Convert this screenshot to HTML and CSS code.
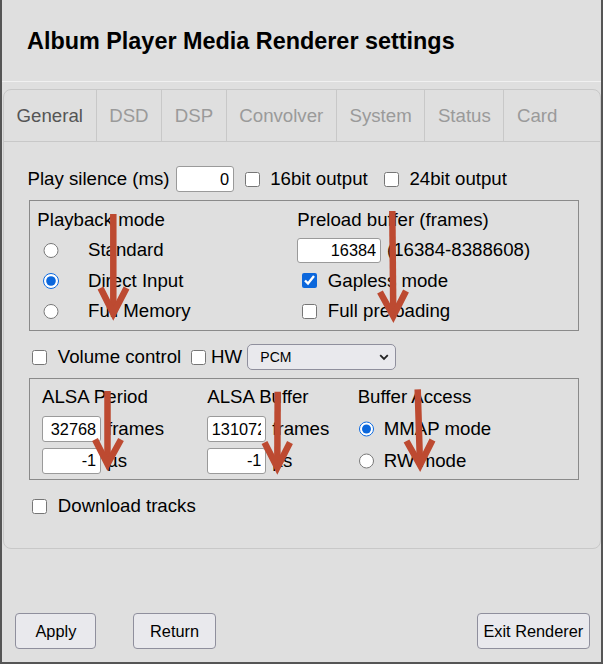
FILE: index.html
```html
<!DOCTYPE html>
<html lang="en">
<head>
<meta charset="utf-8">
<title>Album Player Media Renderer settings</title>
<link rel="stylesheet" href="styles.css">
</head>
<body>
<div class="dialog">
  <header class="dlg-head">
    <h1 class="dlg-title">Album Player Media Renderer settings</h1>
  </header>

  <section class="tabs">
    <nav class="tab-bar">
      <span class="tab active">General</span>
      <span class="tab">DSD</span>
      <span class="tab">DSP</span>
      <span class="tab">Convolver</span>
      <span class="tab">System</span>
      <span class="tab">Status</span>
      <span class="tab last">Card</span>
    </nav>

    <div class="tab-body">
      <div class="row">
        <span class="lbl">Play silence (ms)</span>
        <input class="num in-silence" type="text" value="0">
        <input class="cb cb-16" type="checkbox">
        <span class="small-lbl">16bit output</span>
        <input class="cb cb-24" type="checkbox">
        <span class="small-lbl">24bit output</span>
      </div>

      <fieldset class="box box-play">
        <div class="cell">Playback mode</div>
        <div class="cell">Preload buffer (frames)</div>

        <div class="cell"><span class="rwrap"><input class="rb" type="radio" name="pmode"></span>Standard</div>
        <div class="cell"><input class="num in-preload" type="text" value="16384"><span class="after">(16384-8388608)</span></div>

        <div class="cell"><span class="rwrap"><input class="rb" type="radio" name="pmode" checked></span>Direct Input</div>
        <div class="cell"><input class="cb cb-opt" type="checkbox" checked><span class="opt-lbl">Gapless mode</span></div>

        <div class="cell"><span class="rwrap"><input class="rb" type="radio" name="pmode"></span>Full Memory</div>
        <div class="cell"><input class="cb cb-opt" type="checkbox"><span class="opt-lbl">Full preloading</span></div>
      </fieldset>

      <div class="row row-vol">
        <input class="cb cb-vol" type="checkbox">
        <span class="opt-lbl">Volume control</span>
        <input class="cb cb-hw" type="checkbox">
        <span class="hw-lbl">HW</span>
        <span class="sel-wrap">
          <select class="sel">
            <option>PCM</option>
          </select>
          <svg class="chev" width="10" height="7" viewBox="0 0 10 7"><path d="M1.2 1.2 L5 5 L8.8 1.2" fill="none" stroke="#222" stroke-width="1.8"/></svg>
        </span>
      </div>

      <fieldset class="box box-alsa">
        <div class="cell">ALSA Period</div>
        <div class="cell">ALSA Buffer</div>
        <div class="cell">Buffer Access</div>

        <div class="cell"><input class="num in-alsa" type="text" value="32768"><span class="after">frames</span></div>
        <div class="cell"><input class="num in-alsa" type="text" value="131072"><span class="after">frames</span></div>
        <div class="cell"><input class="rb rb-acc" type="radio" name="acc" checked><span class="acc-lbl">MMAP mode</span></div>

        <div class="cell"><input class="num in-alsa" type="text" value="-1"><span class="after">µs</span></div>
        <div class="cell"><input class="num in-alsa" type="text" value="-1"><span class="after">µs</span></div>
        <div class="cell"><input class="rb rb-acc" type="radio" name="acc"><span class="acc-lbl">RW mode</span></div>
      </fieldset>

      <div class="row row-dl">
        <input class="cb cb-vol" type="checkbox">
        <span class="opt-lbl">Download tracks</span>
      </div>
    </div>
  </section>

  <footer class="dlg-foot">
    <button class="btn btn-apply" type="button">Apply</button>
    <button class="btn btn-return" type="button">Return</button>
    <button class="btn btn-exit" type="button">Exit Renderer</button>
  </footer>
</div>

<!-- hand-drawn markers over the option columns -->
<svg class="marks" width="603" height="664" viewBox="0 0 603 664">
  <g fill="none" stroke="#bd4a31" stroke-width="6.5" stroke-linejoin="miter" stroke-miterlimit="10">
    <path d="M113.3 214 L113.3 314"/>
    <path d="M100.5 288 L113.3 313.5 L126.5 288"/>

    <path d="M392.3 211 L393.3 316"/>
    <path d="M380 292 L393.3 316 L406 291"/>

    <path d="M107.5 391 L107.5 464"/>
    <path d="M95 439.5 L107.5 464 L121 439.5"/>

    <path d="M277.7 391.7 L277.3 467.5"/>
    <path d="M264.5 442.5 L277.3 467.5 L290 442.5"/>

    <path d="M417.7 389.3 L420 465"/>
    <path d="M406.5 441 L420 465 L432.5 440"/>
  </g>
</svg>
</body>
</html>
```

FILE: styles.css
```css
html, body {
  margin: 0;
  padding: 0;
}

body {
  position: relative;
  width: 603px;
  height: 664px;
  overflow: hidden;
  background: #dfdfdf;
  font-family: "Liberation Sans", Arial, sans-serif;
  color: #000;
}

.dialog {
  height: 664px;
  box-sizing: border-box;
  border: 2px solid #555;
  border-top: 0;
  display: flex;
  flex-direction: column;
}

/* header */
.dlg-head {
  height: 81px;
  padding-left: 25px;
  border-bottom: 1px solid #f1f1f1;
}

.dlg-title {
  margin: 0;
  padding-top: 28px;
  font-size: 23.4px;
  line-height: 27px;
  font-weight: bold;
}

/* tab panel */
.tabs {
  height: 460px;
  box-sizing: border-box;
  margin: 7px 0 0 1px;
  border: 1px solid #c8c8c8;
  border-radius: 8px;
}

.tab-bar {
  display: flex;
  height: 51px;
  border-bottom: 1px solid #c8c8c8;
}

.tab {
  padding: 0 12.6px;
  line-height: 51px;
  font-size: 18.67px;
  color: #9a9a9a;
  border-right: 1px solid #c8c8c8;
}

.tab.active {
  color: #555;
}

.tab.last {
  border-right: 0;
}

.tab-body {
  padding: 24px 0 0 23.5px;
  font-size: 18.67px;
}

/* rows */
.row {
  display: flex;
  align-items: center;
  height: 26px;
  white-space: nowrap;
}

.num {
  box-sizing: border-box;
  height: 26px;
  margin: 0;
  padding: 0 3.5px;
  border: 1px solid #9a9a9a;
  border-radius: 3px;
  background: #fff;
  font-family: "Liberation Sans", Arial, sans-serif;
  font-size: 16.33px;
  color: #000;
  text-align: right;
  outline: none;
}

.in-silence {
  width: 57.7px;
  margin-left: 6.3px;
}

.cb, .rb {
  width: 15px;
  height: 15px;
  margin: 0;
  flex: none;
  accent-color: #0b67dc;
}

.rb {
  width: 15.5px;
  height: 15.5px;
}

.cb-16 {
  margin-left: 11px;
}

.cb-24 {
  margin-left: 16px;
}

.small-lbl {
  margin-left: 10.7px;
}

/* fieldsets */
.box {
  margin: 8px 0 0 1.8px;
  min-width: 0;
  width: 549.4px;
  box-sizing: border-box;
  border: 1px solid #8a8a8a;
  display: grid;
  align-items: center;
  white-space: nowrap;
}

.box-play {
  padding: 3.5px 0 3.8px 7px;
  grid-template-columns: 260px 1fr;
  grid-auto-rows: 30.5px;
}

.box-alsa {
  padding: 2.3px 0 2.3px 11.7px;
  grid-template-columns: 165.3px 150.4px 1fr;
  grid-auto-rows: 31.7px;
}

.cell {
  display: flex;
  align-items: center;
}

.rwrap {
  display: inline-flex;
  align-items: center;
  width: 50.7px;
  padding-left: 6px;
  box-sizing: border-box;
}

.in-preload {
  width: 83.4px;
  height: 25px;
}

.after {
  margin-left: 6.3px;
}

.cb-opt {
  margin-left: 5px;
}

.opt-lbl {
  margin-left: 10.5px;
}

/* volume row */
.row-vol {
  margin-top: 13px;
}

.cb-vol {
  margin-left: 4.8px;
}

.cb-hw {
  margin-left: 10.2px;
}

.hw-lbl {
  margin-left: 4.6px;
}

.sel-wrap {
  position: relative;
  display: inline-block;
  margin-left: 4.9px;
  height: 25.7px;
}

.sel {
  appearance: none;
  -webkit-appearance: none;
  width: 149px;
  height: 25.7px;
  margin: 0;
  padding: 0 0 0 12.4px;
  border: 1px solid #8f8f9d;
  border-radius: 5px;
  background: #e9e9ed;
  font-family: "Liberation Sans", Arial, sans-serif;
  font-size: 14px;
  color: #000;
  outline: none;
}

.chev {
  position: absolute;
  right: 7px;
  top: 10px;
}

.in-alsa {
  width: 58.7px;
}

.rb-acc {
  margin-left: 1.3px;
}

.acc-lbl {
  margin-left: 9.3px;
}

.row-dl {
  margin-top: 13.5px;
}

/* footer buttons */
.dlg-foot {
  margin-top: auto;
  display: flex;
  align-items: center;
  padding: 0 11.4px 13px 13.4px;
}

.btn {
  height: 36px;
  margin: 0;
  padding: 0 7px;
  border: 1px solid #8f8f9d;
  border-radius: 4px;
  background: #e9e9ed;
  font-family: "Liberation Sans", Arial, sans-serif;
  font-size: 16.33px;
  color: #000;
}

.btn-apply {
  width: 81px;
}

.btn-return {
  width: 82.3px;
  margin-left: 37px;
}

.btn-exit {
  margin-left: auto;
  padding: 0 5.4px;
}

/* overlay markers */
.marks {
  position: absolute;
  left: 0;
  top: 0;
  pointer-events: none;
}
```
